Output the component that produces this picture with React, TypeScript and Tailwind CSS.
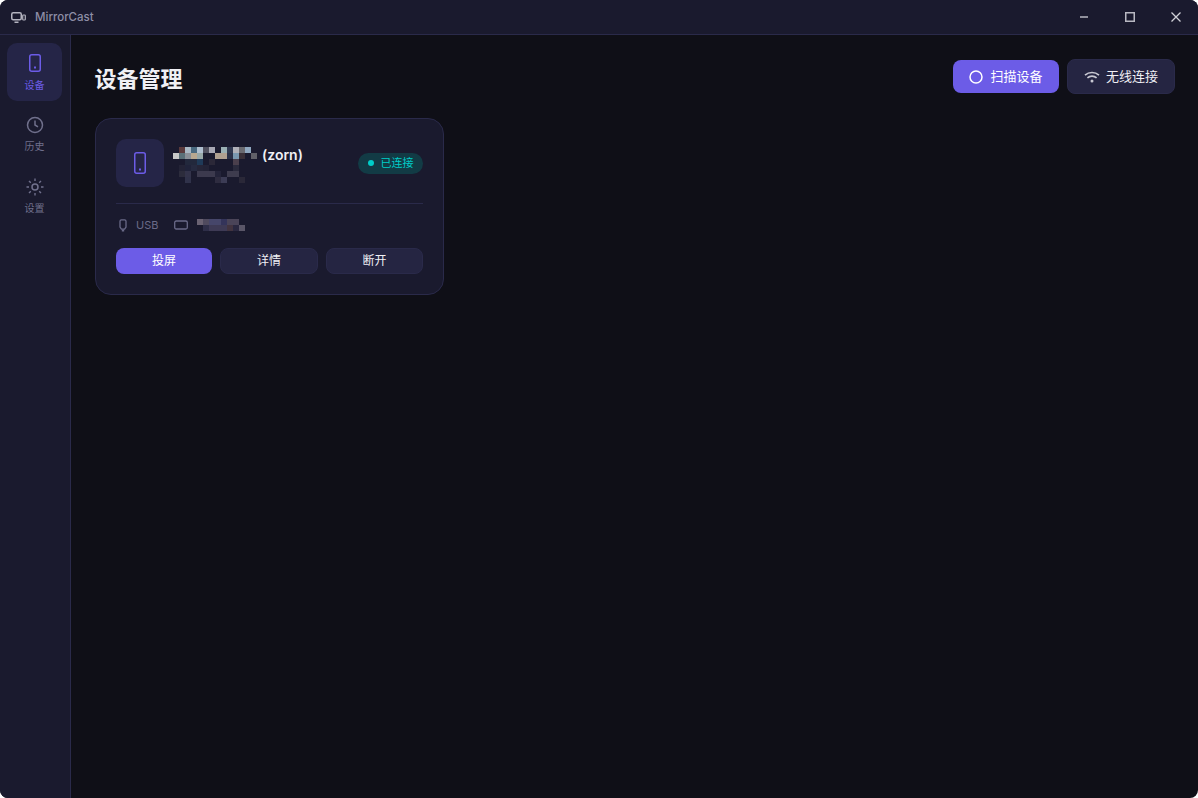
const _ = "";

const nameRows = [
  [_, "#5a3a3c", "#a8b8c4", "#4a6a80", "#b0c0d0", "#50505f", "#a8a8b4", _, "#9ab0b4", "#303850", "#b0b0b8", "#6a6a70", "#90a8c0", _, _],
  ["#c8c8c8", "#5a7078", "#8a9098", "#b8a890", "#98a8a8", _, _, "#b0a090", "#b0a090", "#2a3048", "#7a98b0", "#3a3038", _, "#606068", _],
  [_, _, "#22283c", "#22283c", "#1f3a58", _, "#2b2838", _, _, _, "#4a3f4c", _, _, _, _],
];

const subRows = [
  [_, "#232336", "#20233a", "#262a40", "#252538", "#232336", _, _, _, _, "#2a2a3c", _],
  [_, "#2c2c3c", "#33334a", _, "#3c3a4e", "#3c3a4e", "#3c3a4e", "#24243a", _, "#3e3c4e", "#3e3c4e", _],
  [_, _, "#30324a", _, _, _, _, "#2e2c40", "#3c3c55", _, _, "#2a2838"],
];

const pathRows = [
  ["#6a6272", "#4f4a5e", "#46466a", "#46466a", "#34345a", "#4a4458", "#4a4458", _, _],
  [_, "#2e2e48", "#3e3a55", "#3e3a55", "#3e3a55", "#423440", "#2a2840", "#5a5668", _],
];

function Mosaic({ rows }: { rows: string[][] }) {
  return (
    <div className="flex flex-col shrink-0">
      {rows.map((row, y) => (
        <div key={y} className="flex">
          {row.map((color, x) => (
            <div key={x} className="w-[6px] h-[6px]" style={{ backgroundColor: color || "transparent" }} />
          ))}
        </div>
      ))}
    </div>
  );
}

function PhoneIcon({ h }: { h: number }) {
  return (
    <svg viewBox={`0 0 12 ${h}`} width={12} height={h} fill="none">
      <rect x="0.75" y="0.75" width="10.5" height={h - 1.5} rx="2" stroke="currentColor" strokeWidth="1.5" />
      <rect x="5" y={h - 5.5} width="2" height="2" fill="currentColor" />
    </svg>
  );
}

export default function App() {
  return (
    <div className="h-[798px] w-[1198px] rounded-[8px] overflow-hidden flex flex-col bg-[#0f0f17] text-white font-['Inter','Noto_Sans_CJK_SC',sans-serif]">
      {/* Title bar */}
      <div className="h-[35px] shrink-0 flex items-center bg-[#1a1a2e] border-b border-[#2a2a4a]">
        <svg viewBox="0 0 15 11" fill="none" className="w-[15px] h-[11px] ml-[11px] text-[#b4b4c0]">
          <rect x="0.75" y="0.75" width="9.5" height="7" rx="1.5" stroke="currentColor" strokeWidth="1.5" />
          <path d="M3.5 10.2H7.5" stroke="currentColor" strokeWidth="1.4" />
          <rect x="11.7" y="3" width="2.6" height="5" rx="0.8" stroke="currentColor" strokeWidth="1.2" />
        </svg>
        <span className="ml-[9px] pt-[2px] text-[11.5px] font-medium text-[#8e8ea6]">MirrorCast</span>
        <div className="ml-auto -mr-px flex items-center text-[#b8b8c2]">
          <button className="w-[46px] h-[34px] flex items-center justify-center">
            <svg viewBox="0 0 10 10" className="w-[10px] h-[10px]">
              <path d="M1 5H9" stroke="currentColor" strokeWidth="1.5" />
            </svg>
          </button>
          <button className="w-[46px] h-[34px] flex items-center justify-center">
            <svg viewBox="0 0 10 10" fill="none" className="w-[10px] h-[10px]">
              <rect x="0.75" y="0.75" width="8.5" height="8.5" stroke="currentColor" strokeWidth="1.5" />
            </svg>
          </button>
          <button className="w-[46px] h-[34px] flex items-center justify-center text-[#d0d0d8]">
            <svg viewBox="0 0 10 10" className="w-[10px] h-[10px]">
              <path d="M0.5 0.5L9.5 9.5M9.5 0.5L0.5 9.5" stroke="currentColor" strokeWidth="1.3" />
            </svg>
          </button>
        </div>
      </div>

      <div className="flex-1 flex min-h-0">
        {/* Sidebar */}
        <div className="w-[71px] shrink-0 bg-[#1a1a2e] border-r border-[#2a2a4a] pt-[8px] px-[7px] flex flex-col gap-[4px]">
          <div className="h-[58px] w-[55px] rounded-[10px] bg-[#252547] flex flex-col items-center pt-[11px] text-[#6c5ce7]">
            <PhoneIcon h={18} />
            <span className="mt-[6px] text-[10px] leading-[14px]">设备</span>
          </div>
          <div className="h-[58px] w-[55px] flex flex-col items-center pt-[11px] text-[#70708c]">
            <svg viewBox="0 0 18 18" fill="none" className="w-[18px] h-[18px]">
              <circle cx="9" cy="9" r="7.5" stroke="currentColor" strokeWidth="1.5" />
              <path d="M9 4.5V9L12 10.8" stroke="currentColor" strokeWidth="1.5" />
            </svg>
            <span className="mt-[5px] text-[10px] leading-[14px]">历史</span>
          </div>
          <div className="h-[58px] w-[55px] flex flex-col items-center pt-[11px] text-[#70708c]">
            <svg viewBox="0 0 18 18" fill="none" className="w-[18px] h-[18px]">
              <circle cx="9" cy="9" r="3" stroke="currentColor" strokeWidth="1.5" />
              <path
                d="M9 0.5V3M9 15V17.5M0.5 9H3M15 9H17.5M3 3L4.8 4.8M13.2 13.2L15 15M15 3L13.2 4.8M4.8 13.2L3 15"
                stroke="currentColor"
                strokeWidth="1.4"
              />
            </svg>
            <span className="mt-[5px] text-[10px] leading-[14px]">设置</span>
          </div>
        </div>

        {/* Main */}
        <div className="flex-1 pl-[24px] pr-[23px] pt-[24px]">
          <div className="flex items-center justify-between h-[35px]">
            <h1 className="text-[22px] font-bold text-[#f0f0f5] leading-[36px] mt-[5px] -ml-[0.5px]">设备管理</h1>
            <div className="flex items-center gap-[8px]">
              <button className="h-[33px] w-[106px] rounded-[8px] bg-[#6c5ce7] flex items-center justify-center gap-[7px] text-[13px] text-white">
                <svg viewBox="0 0 14 14" fill="none" className="w-[14px] h-[14px]">
                  <circle cx="7" cy="7" r="6" stroke="currentColor" strokeWidth="1.5" />
                </svg>
                扫描设备
              </button>
              <button className="h-[35px] w-[108px] rounded-[8px] bg-[#252542] border border-[#2a2a4a] flex items-center justify-center gap-[6px] text-[13px] text-[#f0f0f5]">
                <svg viewBox="0 0 16 12" fill="none" className="w-[16px] h-[12px] text-[#c8c8d2]">
                  <path d="M1 4.2C5 0.6 11 0.6 15 4.2M3.4 6.8C6 4.5 10 4.5 12.6 6.8" stroke="currentColor" strokeWidth="1.6" />
                  <circle cx="8" cy="10" r="1.5" fill="currentColor" />
                </svg>
                无线连接
              </button>
            </div>
          </div>

          {/* Device card */}
          <div className="mt-[24px] w-[349px] h-[177px] rounded-[16px] bg-[#1a1a2e] border border-[#2a2a4a] p-[20px]">
            <div className="flex items-center h-[48px]">
              <div className="w-[48px] h-[48px] rounded-[10px] bg-[#252547] flex items-center justify-center text-[#6c5ce7]">
                <PhoneIcon h={22} />
              </div>
              <div className="ml-[9px] flex flex-col">
                <div className="flex items-center h-[22px]">
                  <div className="mt-[4px]">
                    <Mosaic rows={nameRows} />
                  </div>
                  <span className="-ml-px text-[14px] font-semibold text-[#f0f0f5]">(zorn)</span>
                </div>
                <Mosaic rows={subRows} />
              </div>
              <div className="ml-auto h-[21px] w-[65px] rounded-full bg-[#123b45] flex items-center justify-center gap-[7px] text-[11px] text-[#00cec9]">
                <span className="w-[6px] h-[6px] rounded-full bg-[#00cec9]" />
                已连接
              </div>
            </div>

            <div className="mt-[16px] border-t border-[#2a2a4a]" />

            <div className="mt-[11px] h-[20px] flex items-center text-[11px] text-[#6a6a88]">
              <svg viewBox="0 0 8 13" fill="none" className="ml-[3px] w-[8px] h-[13px]">
                <path
                  d="M1 2.2C1 1.4 1.6 0.8 2.4 0.8H5.6C6.4 0.8 7 1.4 7 2.2V8L5.6 10.2H2.4L1 8V2.2Z"
                  stroke="currentColor"
                  strokeWidth="1.3"
                />
                <rect x="2.8" y="10.5" width="2.4" height="2" fill="currentColor" />
              </svg>
              <span className="ml-[9px]">USB</span>
              <svg viewBox="0 0 14 10" fill="none" className="ml-[16px] w-[14px] h-[10px]">
                <rect x="0.7" y="1" width="12.6" height="8" rx="1.5" stroke="currentColor" strokeWidth="1.3" />
              </svg>
              <div className="ml-[9px]">
                <Mosaic rows={pathRows} />
              </div>
            </div>

            <div className="mt-[13px] flex gap-[8px] h-[26px]">
              <button className="w-[96px] rounded-[8px] bg-[#6c5ce7] text-[12px] text-white">投屏</button>
              <button className="w-[98px] rounded-[8px] bg-[#252542] border border-[#2a2a4a] text-[12px] text-[#f0f0f5]">详情</button>
              <button className="flex-1 rounded-[8px] bg-[#252542] border border-[#2a2a4a] text-[12px] text-[#f0f0f5]">断开</button>
            </div>
          </div>
        </div>
      </div>
    </div>
  );
}
